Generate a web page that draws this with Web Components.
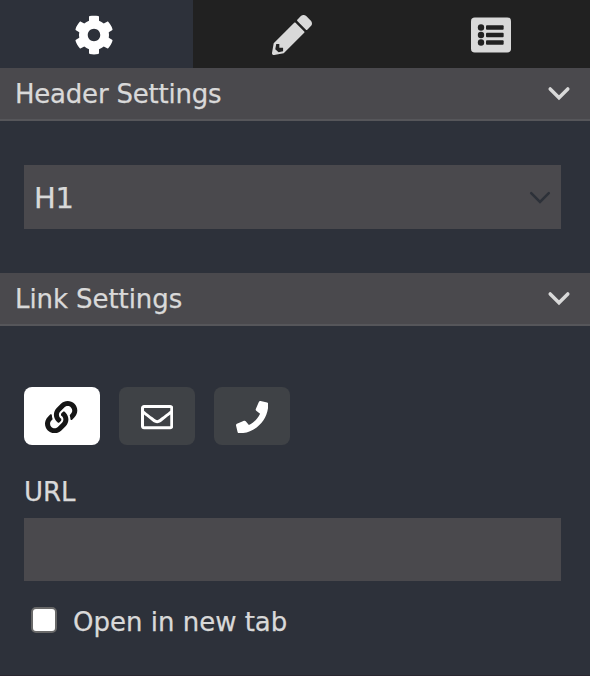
<!DOCTYPE html>
<html lang="en">
<head>
<meta charset="utf-8">
<title>Element settings</title>
<style>
body{margin:0;background:#2d313a;color:#d9d9d9;font:26px/32px Verdana,"DejaVu Sans",sans-serif;-webkit-text-stroke:.25px currentColor}
</style>
</head>
<body>
<settings-panel></settings-panel>
<script>
const cog='<path d="M487.4 315.7l-42.6-24.6c4.3-23.2 4.3-47 0-70.2l42.6-24.6c4.9-2.8 7.1-8.6 5.5-14-11.1-35.6-30-67.8-54.7-94.6-3.8-4.1-10-5.1-14.8-2.3L380.8 110c-17.9-15.4-38.5-27.3-60.8-35.1V25.8c0-5.6-3.9-10.5-9.4-11.7-36.7-8.2-74.3-7.8-109.2 0-5.5 1.2-9.4 6.1-9.4 11.7V75c-22.2 7.9-42.8 19.8-60.8 35.1L88.7 85.5c-4.9-2.8-11-1.9-14.8 2.3-24.7 26.7-43.6 58.9-54.7 94.6-1.7 5.4.6 11.2 5.5 14L67.3 221c-4.3 23.2-4.3 47 0 70.2l-42.6 24.6c-4.9 2.8-7.1 8.6-5.5 14 11.1 35.6 30 67.8 54.7 94.6 3.8 4.1 10 5.1 14.8 2.3l42.6-24.6c17.9 15.4 38.5 27.3 60.8 35.1v49.2c0 5.6 3.9 10.5 9.4 11.7 36.7 8.2 74.3 7.8 109.2 0 5.5-1.2 9.4-6.1 9.4-11.7v-49.2c22.2-7.9 42.8-19.8 60.8-35.1l42.6 24.6c4.9 2.8 11 1.9 14.8-2.3 24.7-26.7 43.6-58.9 54.7-94.6 1.5-5.5-.7-11.3-5.6-14.1zM256 336c-44.1 0-80-35.9-80-80s35.9-80 80-80 80 35.9 80 80-35.9 80-80 80z"/>';
const pencil='<path fill-rule="evenodd" d="M497.9 142.1l-46.1 46.1c-4.7 4.7-12.3 4.7-17 0l-111-111c-4.7-4.7-4.7-12.3 0-17l46.1-46.1c18.7-18.7 49.1-18.7 67.9 0l60.1 60.1c18.8 18.7 18.8 49.1 0 67.9zM284.2 99.8L21.6 362.4.4 483.9c-2.9 16.4 11.4 30.6 27.8 27.8l121.5-21.3 262.6-262.6c4.7-4.7 4.7-12.3 0-17l-111-111c-4.8-4.7-12.4-4.7-17.1 0zM54 372H94V420H142V464L84 476L42 438Z"/>';
const dot=y=>`<circle cx="128" cy="${y}" r="41" fill="#212121"/><rect x="192" y="${y-29}" width="226" height="58" rx="12" fill="#212121"/>`;
const list=`<rect y="32" width="512" height="448" rx="48"/>${dot(160)}${dot(256)}${dot(352)}`;
const link='<path d="M326.612 185.391c59.747 59.809 58.927 155.698.36 214.59-.11.12-.24.25-.36.37l-67.2 67.2c-59.27 59.27-155.699 59.262-214.96 0-59.27-59.26-59.27-155.7 0-214.96l37.106-37.106c9.84-9.84 26.786-3.3 27.294 10.606.648 17.722 3.826 35.527 9.69 52.721 1.986 5.822.567 12.262-3.783 16.612l-13.087 13.087c-28.026 28.026-28.905 73.66-1.155 101.96 28.024 28.579 74.086 28.749 102.325.51l67.2-67.19c28.191-28.191 28.073-73.757 0-101.83-3.701-3.694-7.429-6.564-10.341-8.569a16.037 16.037 0 0 1-6.947-12.606c-.396-10.567 3.348-21.456 11.698-29.806l21.054-21.055c5.521-5.521 14.182-6.199 20.584-1.731a152.482 152.482 0 0 1 20.522 17.197zM467.547 44.449c-59.261-59.262-155.69-59.27-214.96 0l-67.2 67.2c-.12.12-.25.25-.36.37-58.566 58.892-59.387 154.781.36 214.59a152.454 152.454 0 0 0 20.521 17.196c6.402 4.468 15.064 3.789 20.584-1.731l21.054-21.055c8.35-8.35 12.094-19.239 11.698-29.806a16.037 16.037 0 0 0-6.947-12.606c-2.912-2.005-6.64-4.875-10.341-8.569-28.073-28.073-28.191-73.639 0-101.83l67.2-67.19c28.239-28.239 74.3-28.069 102.325.51 27.75 28.3 26.872 73.934-1.155 101.96l-13.087 13.087c-4.35 4.35-5.769 10.79-3.783 16.612 5.864 17.194 9.042 34.999 9.69 52.721.509 13.906 17.454 20.446 27.294 10.606l37.106-37.106c59.271-59.259 59.271-155.699.001-214.959z"/>';
const mail='<path d="M464 64H48C21.49 64 0 85.49 0 112v288c0 26.51 21.49 48 48 48h416c26.51 0 48-21.49 48-48V112c0-26.51-21.49-48-48-48zm0 48v40.805c-22.422 18.259-58.168 46.651-134.587 106.49-16.841 13.247-50.201 45.072-73.413 44.701-23.208.375-56.579-31.459-73.413-44.701C106.18 199.465 70.425 171.067 48 152.805V112h416zM48 400V214.398c22.914 18.251 55.409 43.862 104.938 82.646 21.857 17.205 60.134 55.186 103.062 54.955 42.717.231 80.509-37.199 103.053-54.947 49.528-38.783 82.032-64.401 104.947-82.653V400H48z"/>';
const phone='<path d="M493.4 24.6l-104-24c-11.3-2.6-22.9 3.3-27.5 13.9l-48 112c-4.2 9.8-1.4 21.3 6.9 28l60.6 49.6c-36 76.7-98.9 140.5-177.2 177.2l-49.6-60.6c-6.8-8.3-18.2-11.1-28-6.9l-112 48C3.9 366.5-2 378.1.6 389.4l24 104C27.1 504.2 36.7 512 48 512c256.1 0 464-207.5 464-464 0-11.2-7.7-20.9-18.6-23.4z"/>';
const icons={cog,pencil,list,link,mail,phone};

function define(name,render){
  customElements.define(name,class extends HTMLElement{
    constructor(){super();this.attachShadow({mode:'open'})}
    connectedCallback(){this.shadowRoot.innerHTML=render(this)}
  });
}

define('ui-icon',el=>`<style>
  :host{display:block;width:var(--size,40px);height:var(--size,40px)}
  svg{display:block;width:100%;height:100%;fill:currentColor}
</style><svg viewBox="0 0 512 512">${icons[el.getAttribute('name')]}</svg>`);

define('ui-chevron',el=>`<style>
  :host{display:block;width:24px;height:16px}
  svg{display:block;fill:none;stroke:currentColor;stroke-linecap:round;stroke-linejoin:miter}
</style><svg width="24" height="16" viewBox="0 0 24 16"><path d="${el.hasAttribute('thin')?'M3.2 3.1L12 11.9L20.8 3.1':'M3.2 2.9L12 11.7L20.8 2.9'}" stroke-width="${el.hasAttribute('thin')?2.5:3.5}"/></svg>`);

define('tab-item',()=>`<style>
  :host{display:flex;justify-content:center;align-items:center;padding-top:2px;box-sizing:border-box;background:#212121;color:#d9d9d9}
  :host([active]){background:#2d313a;color:#fff}
</style><slot></slot>`);

define('tab-bar',()=>`<style>
  :host{display:grid;grid-template-columns:193px 198px 199px;height:68px}
</style><slot></slot>`);

define('section-header',()=>`<style>
  :host{display:flex;justify-content:space-between;align-items:center;box-sizing:border-box;height:53px;padding:0 19px 0 15px;background:#4a494d;border-bottom:2px solid #56565a}
  ui-chevron{margin-right:.5px}
  span{white-space:nowrap;letter-spacing:var(--track,0)}
</style><span><slot></slot></span><ui-chevron></ui-chevron>`);

define('select-box',()=>`<style>
  :host{display:flex;justify-content:space-between;align-items:center;box-sizing:border-box;height:64px;padding:2px 9px 0 10px;background:#4a494d;font-size:29px;letter-spacing:-.4px}
  ui-chevron{color:#2d3139}
</style><span><slot></slot></span><ui-chevron thin></ui-chevron>`);

define('icon-button',()=>`<style>
  :host{display:flex;justify-content:center;align-items:center;box-sizing:border-box;width:76px;height:58px;padding-top:2px;border-radius:8px;background:#3f4246;color:#fff;--size:32.3px}
  :host([active]){background:#fff;color:#161616;padding-right:1px}
</style><slot></slot>`);

define('text-field',()=>`<style>
  :host{display:block}
  label{display:block;height:42px}
  div{height:63px;background:#4a494d}
</style><label><slot></slot></label><div></div>`);

define('check-field',()=>`<style>
  :host{display:flex;align-items:center;gap:16px;padding-left:7px;height:32px}
  i{box-sizing:border-box;width:26px;height:26px;border:2px solid #696969;border-radius:5px;background:#fff;margin-top:-4px}
</style><i></i><span><slot></slot></span>`);

define('settings-panel',()=>`<style>
  :host{display:flex;flex-direction:column;box-sizing:border-box;height:676px;border-bottom:1px solid #2a2730}
  .body{display:flex;flex-direction:column;padding:44px 29px 44px 24px}
  .link{padding:61px 29px 0 24px}
  .buttons{display:flex;gap:19px;margin-bottom:31px}
  check-field{margin-top:25px}
</style>
<tab-bar>
  <tab-item active style="padding-right:5px"><ui-icon name="cog"></ui-icon></tab-item>
  <tab-item><ui-icon name="pencil"></ui-icon></tab-item>
  <tab-item style="padding-left:1px"><ui-icon name="list"></ui-icon></tab-item>
</tab-bar>
<section-header style="--track:-.22px">Header Settings</section-header>
<div class="body"><select-box>H1</select-box></div>
<section-header style="--track:-.08px">Link Settings</section-header>
<div class="body link">
  <div class="buttons">
    <icon-button active><ui-icon name="link"></ui-icon></icon-button>
    <icon-button><ui-icon name="mail"></ui-icon></icon-button>
    <icon-button><ui-icon name="phone"></ui-icon></icon-button>
  </div>
  <text-field>URL</text-field>
  <check-field>Open in new tab</check-field>
</div>`);
</script>
</body>
</html>
